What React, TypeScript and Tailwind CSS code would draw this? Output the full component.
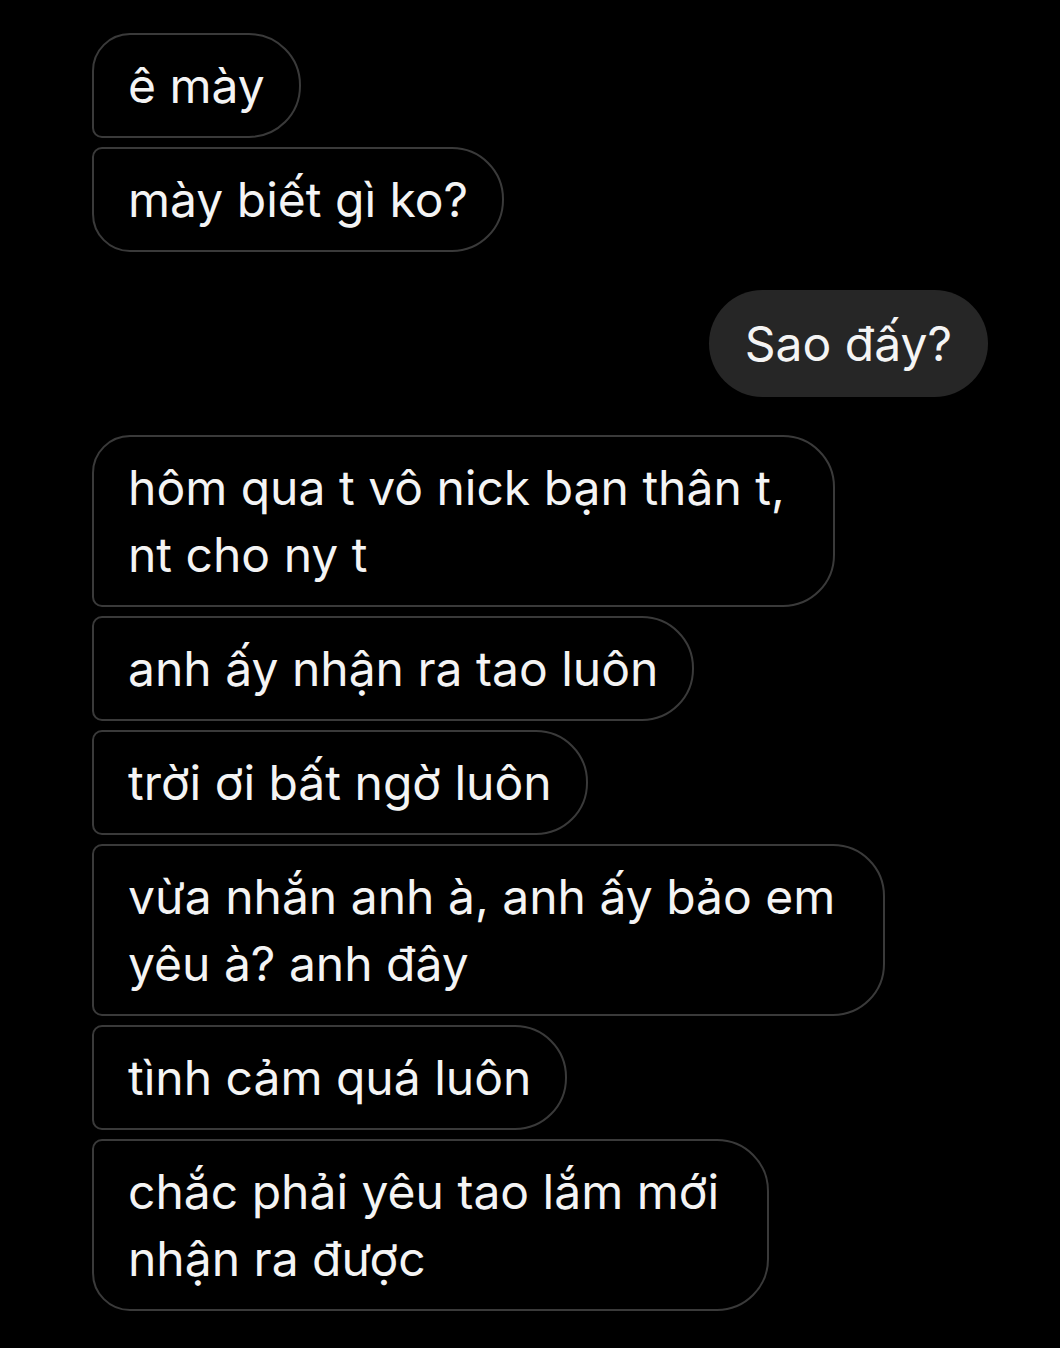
import React from "react";

type Pos = "first" | "mid" | "last";

function Left({ lines, pos }: { lines: string[]; pos: Pos }) {
  const r =
    pos === "first"
      ? "rounded-tl-[38px] rounded-bl-[10px]"
      : pos === "last"
      ? "rounded-tl-[10px] rounded-bl-[38px]"
      : "rounded-tl-[10px] rounded-bl-[10px]";
  const pr = lines.length > 1 ? "pr-[48px]" : "pr-[34px]";
  return (
    <div
      className={`self-start border-2 border-[#3a3a3a] bg-black rounded-tr-[52px] rounded-br-[52px] ${r} pl-[34px] ${pr} py-[17px] text-[#f4f4f4] text-[48px] leading-[67px]`}
    >
      {lines.map((l, i) => (
        <div key={i} className="whitespace-nowrap">
          {l}
        </div>
      ))}
    </div>
  );
}

export default function App() {
  return (
    <div
      className="w-[1060px] h-[1348px] bg-black overflow-hidden flex flex-col pl-[92px] pr-[72px] pt-[33px]"
      style={{ fontFamily: "Inter, 'Noto Sans', sans-serif" }}
    >
      <div className="flex flex-col gap-[9px]">
        <Left lines={["ê mày"]} pos="first" />
        <Left lines={["mày biết gì ko?"]} pos="last" />
      </div>
      <div className="flex justify-end mt-[38px]">
        <div className="bg-[#262626] rounded-[54px] px-[36px] py-[20px] text-[#f4f4f4] text-[48px] leading-[67px] whitespace-nowrap">
          Sao đấy?
        </div>
      </div>
      <div className="flex flex-col gap-[9px] mt-[38px]">
        <Left lines={["hôm qua t vô nick bạn thân t,", "nt cho ny t"]} pos="first" />
        <Left lines={["anh ấy nhận ra tao luôn"]} pos="mid" />
        <Left lines={["trời ơi bất ngờ luôn"]} pos="mid" />
        <Left lines={["vừa nhắn anh à, anh ấy bảo em", "yêu à? anh đây"]} pos="mid" />
        <Left lines={["tình cảm quá luôn"]} pos="mid" />
        <Left lines={["chắc phải yêu tao lắm mới", "nhận ra được"]} pos="last" />
      </div>
    </div>
  );
}
